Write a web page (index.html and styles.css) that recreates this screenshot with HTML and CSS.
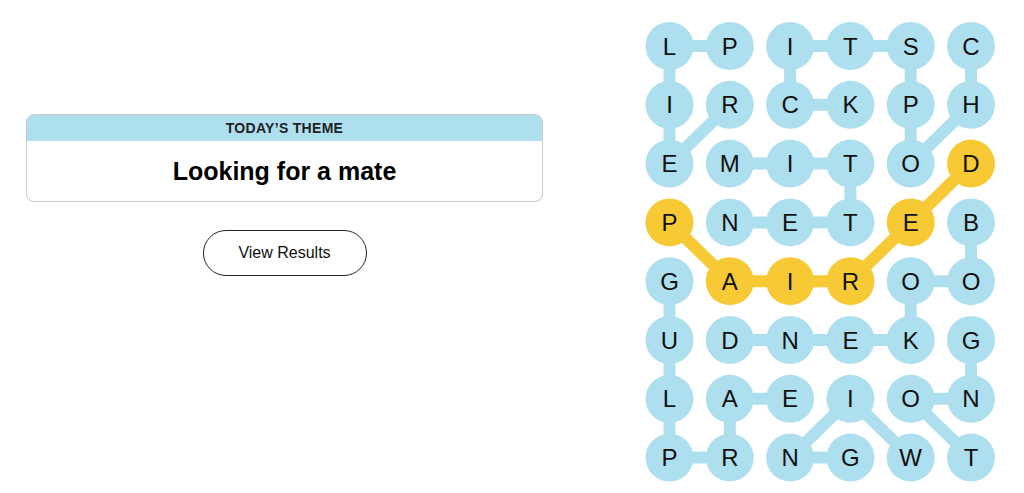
FILE: index.html
```html
<!DOCTYPE html>
<html lang="en">
<head>
  <meta charset="UTF-8">
  <meta name="viewport" content="width=device-width, initial-scale=1.0">
  <title>Strands</title>
  <link rel="stylesheet" href="styles.css">
</head>
<body>
  <div class="page">
    <div class="side">
      <div class="theme-card">
        <div class="theme-label">Today’s Theme</div>
        <div class="theme-clue">Looking for a mate</div>
      </div>
      <button class="results-btn">View Results</button>
    </div>

    <svg class="board" id="board" width="360" height="470" viewBox="0 0 360 470"></svg>
  </div>

  <script>
    const rows = [
      "LPITSC",
      "IRCKPH",
      "EMITOD",
      "PNETEB",
      "GAIROO",
      "UDNEKG",
      "LAEION",
      "PRNGWT",
    ];

    // spangram cells, as "col,row"
    const spangram = ["0,3", "1,4", "2,4", "3,4", "4,3", "5,2"];

    const blueLinks = [
      [0,0,1,0], [2,0,3,0], [3,0,4,0],
      [0,0,0,1], [2,0,2,1], [4,0,4,1], [5,0,5,1],
      [2,1,3,1], [1,1,0,2], [4,1,4,2], [5,1,4,2], [0,1,0,2],
      [1,2,2,2], [2,2,3,2], [3,2,3,3],
      [1,3,2,3], [2,3,3,3], [5,3,5,4],
      [4,4,5,4], [0,4,0,5], [4,4,4,5],
      [1,5,2,5], [2,5,3,5], [3,5,4,5], [5,5,5,6], [0,5,0,6],
      [1,6,2,6], [4,6,5,6], [0,6,0,7], [1,6,1,7], [3,6,2,7], [3,6,4,7], [4,6,5,7],
      [0,7,1,7], [2,7,3,7],
    ];

    const yellowLinks = [
      [0,3,1,4], [1,4,2,4], [2,4,3,4], [3,4,4,3], [4,3,5,2],
    ];

    const board = document.getElementById("board");
    const ns = "http://www.w3.org/2000/svg";
    const cx = (c) => 29.5 + c * 60.3;
    const cy = (r) => 31 + r * 58.8;

    function addLink(link, cls) {
      const line = document.createElementNS(ns, "line");
      line.setAttribute("x1", cx(link[0]));
      line.setAttribute("y1", cy(link[1]));
      line.setAttribute("x2", cx(link[2]));
      line.setAttribute("y2", cy(link[3]));
      line.setAttribute("class", cls);
      board.appendChild(line);
    }

    blueLinks.forEach(l => addLink(l, "link"));
    yellowLinks.forEach(l => addLink(l, "link span"));

    rows.forEach((row, r) => {
      row.split("").forEach((letter, c) => {
        const isSpan = spangram.includes(c + "," + r);

        const dot = document.createElementNS(ns, "circle");
        dot.setAttribute("cx", cx(c));
        dot.setAttribute("cy", cy(r));
        dot.setAttribute("r", 24);
        dot.setAttribute("class", isSpan ? "dot span" : "dot");
        board.appendChild(dot);

        const text = document.createElementNS(ns, "text");
        text.setAttribute("x", cx(c));
        text.setAttribute("y", cy(r) + 8.5);
        text.setAttribute("class", "letter");
        text.textContent = letter;
        board.appendChild(text);
      });
    });
  </script>
</body>
</html>
```

FILE: styles.css
```css
body {
  margin: 0;
  font-family: "Liberation Sans", Arial, sans-serif;
  color: #000;
  background: #fff;
}
.page {
  display: flex;
  align-items: flex-start;
  padding: 15px 24px 0 26px;
}
.side {
  width: 517px;
  padding-top: 99px;
  display: flex;
  flex-direction: column;
  align-items: center;
}
.theme-card {
  width: 100%;
  box-sizing: border-box;
  border: 1px solid #c8c8c8;
  border-radius: 8px;
  overflow: hidden;
}
.theme-label {
  background-color: #aedfee;
  height: 26px;
  line-height: 27px;
  text-align: center;
  text-transform: uppercase;
  font-size: 14px;
  font-weight: bold;
  letter-spacing: 0.3px;
  color: #222;
}
.theme-clue {
  height: 60px;
  line-height: 60px;
  text-align: center;
  font-size: 25px;
  font-weight: bold;
}
.results-btn {
  margin-top: 28px;
  width: 164px;
  height: 46px;
  border: 1px solid #222;
  border-radius: 23px;
  background: #fff;
  font-family: "Liberation Sans", Arial, sans-serif;
  font-size: 16px;
  color: #111;
  cursor: pointer;
}
.board {
  margin-left: auto;
  display: block;
}
.link {
  stroke: #aedfee;
  stroke-width: 12;
}
.link.span {
  stroke: #f7c934;
}
.dot {
  fill: #aedfee;
}
.dot.span {
  fill: #f7c934;
}
.letter {
  font-family: "Liberation Sans", Arial, sans-serif;
  font-size: 24px;
  text-anchor: middle;
  fill: #111;
}
```
